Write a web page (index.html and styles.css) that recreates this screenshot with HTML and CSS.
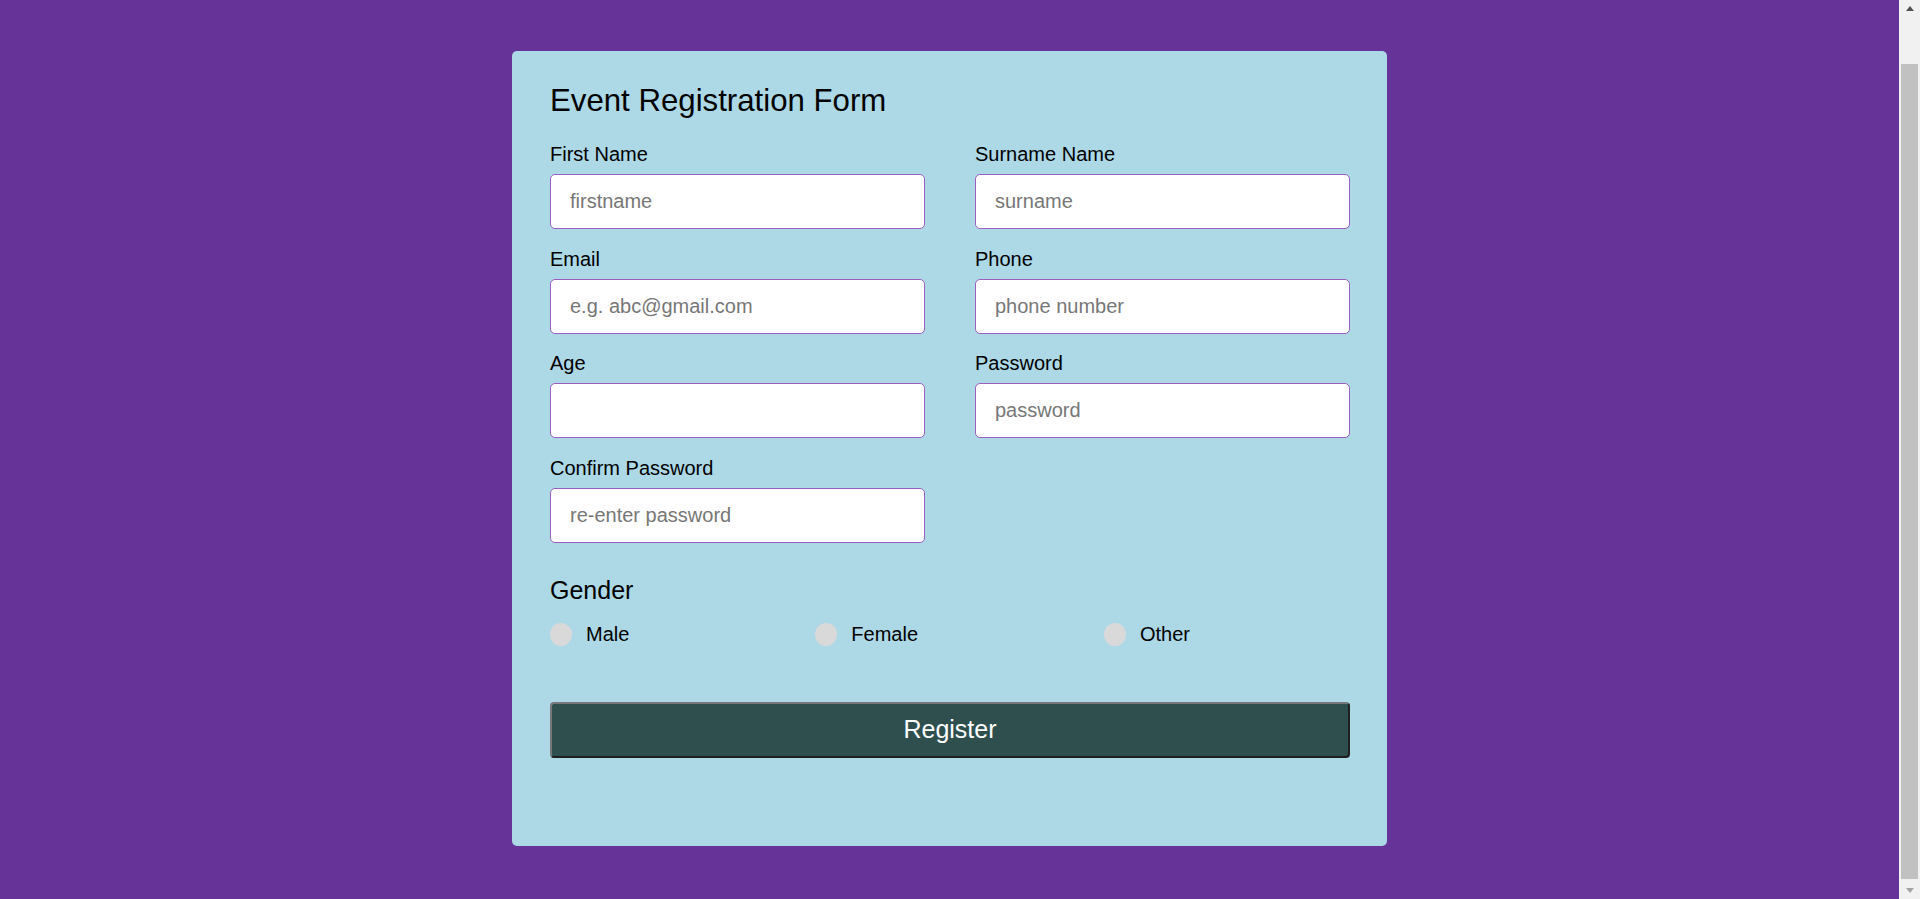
FILE: index.html
```html
<!DOCTYPE html>
<html lang="en">
<head>
<meta charset="utf-8">
<title>Event Registration Form</title>
<link rel="stylesheet" href="styles.css">
</head>
<body>
<main class="page">
  <form class="card">
    <h1 class="title">Event Registration Form</h1>
    <div class="fields">
      <div class="field">
        <label class="label" for="fn">First Name</label>
        <input class="input" id="fn" type="text" placeholder="firstname">
      </div>
      <div class="field">
        <label class="label" for="sn">Surname Name</label>
        <input class="input" id="sn" type="text" placeholder="surname">
      </div>
      <div class="field">
        <label class="label" for="em">Email</label>
        <input class="input" id="em" type="email" placeholder="e.g. abc@gmail.com">
      </div>
      <div class="field">
        <label class="label" for="ph">Phone</label>
        <input class="input" id="ph" type="text" placeholder="phone number">
      </div>
      <div class="field">
        <label class="label" for="ag">Age</label>
        <input class="input" id="ag" type="text">
      </div>
      <div class="field">
        <label class="label" for="pw">Password</label>
        <input class="input" id="pw" type="password" placeholder="password">
      </div>
      <div class="field">
        <label class="label" for="cp">Confirm Password</label>
        <input class="input" id="cp" type="password" placeholder="re-enter password">
      </div>
    </div>
    <h2 class="gender-title">Gender</h2>
    <div class="radios">
      <label class="radio"><input class="radio-input" type="radio" name="g"><span>Male</span></label>
      <label class="radio"><input class="radio-input" type="radio" name="g"><span>Female</span></label>
      <label class="radio"><input class="radio-input" type="radio" name="g"><span>Other</span></label>
    </div>
    <button class="submit" type="button">Register</button>
  </form>
</main>
<div class="scrollbar" aria-hidden="true">
  <div class="sb-btn"><span class="sb-arrow-up"></span></div>
  <div class="sb-track"><div class="sb-thumb"></div></div>
  <div class="sb-btn"><span class="sb-arrow-down"></span></div>
</div>
<script src="script.js"></script>
</body>
</html>
```
FILE: styles.css
```css
html {
  background: #663399;
}
body {
  margin: 0;
  padding-right: 21px;
  background: #663399;
  font-family: "Liberation Sans", Arial, sans-serif;
  color: #000;
}
.page {
  padding: 107px 0 53px;
}
.card {
  box-sizing: border-box;
  width: 875px;
  margin: 0 auto;
  background: #add8e6;
  border-radius: 5px;
  padding: 32px 37px 88px 38px;
}
.title {
  margin: 0 0 24px;
  font-size: 31.2px;
  line-height: 36px;
  font-weight: normal;
}
.fields {
  display: grid;
  grid-template-columns: 375px 375px;
  column-gap: 50px;
  row-gap: 18.5px;
}
.field {
  display: flex;
  flex-direction: column;
}
.label {
  font-size: 20px;
  line-height: 23px;
  margin-bottom: 8px;
}
.input {
  box-sizing: border-box;
  height: 55px;
  margin: 0;
  padding: 0 19px;
  border: 1px solid #9b5fc2;
  border-radius: 5px;
  background: #fff;
  font-family: "Liberation Sans", Arial, sans-serif;
  font-size: 20px;
  color: #000;
  outline: none;
}
.input::placeholder {
  color: #777777;
}
.gender-title {
  margin: 33px 0 19px;
  font-size: 25px;
  line-height: 28px;
  font-weight: normal;
}
.radios {
  display: flex;
  justify-content: space-between;
  width: 640px;
  height: 24px;
}
.radio {
  display: flex;
  align-items: center;
  gap: 14px;
  font-size: 20px;
  line-height: 23px;
}
.radio-input {
  appearance: none;
  -webkit-appearance: none;
  width: 22px;
  height: 23px;
  margin: 0;
  border-radius: 50%;
  background: #d9d9d9;
}
.submit {
  display: block;
  box-sizing: border-box;
  width: 800px;
  height: 56px;
  margin-top: 55px;
  padding: 0;
  background: #2f4f4f;
  color: #fff;
  font-family: "Liberation Sans", Arial, sans-serif;
  font-size: 25px;
  border: 2px solid;
  border-color: #777777 #1f1f1f #1f1f1f #777777;
  border-radius: 4px;
}
.scrollbar {
  position: fixed;
  top: 0;
  right: 0;
  width: 21px;
  height: 100%;
  display: flex;
  flex-direction: column;
  background: #f1f1f1;
}
.sb-btn {
  height: 17px;
  flex: none;
  display: flex;
  align-items: center;
  justify-content: center;
  padding-left: 1px;
}
.sb-arrow-up {
  width: 0;
  height: 0;
  border-left: 4.5px solid transparent;
  border-right: 4.5px solid transparent;
  border-bottom: 5px solid #505050;
}
.sb-arrow-down {
  width: 0;
  height: 0;
  border-left: 4.5px solid transparent;
  border-right: 4.5px solid transparent;
  border-top: 5px solid #a3a3a3;
}
.sb-track {
  flex: 1;
  display: flex;
  padding: 47px 2px 3px 2px;
}
.sb-thumb {
  flex: 1;
  background: #c1c1c1;
}
```
FILE: script.js
```js
window.scrollTo(0, document.documentElement.scrollHeight);
window.addEventListener('load', function () {
  window.scrollTo(0, document.documentElement.scrollHeight);
});
```
